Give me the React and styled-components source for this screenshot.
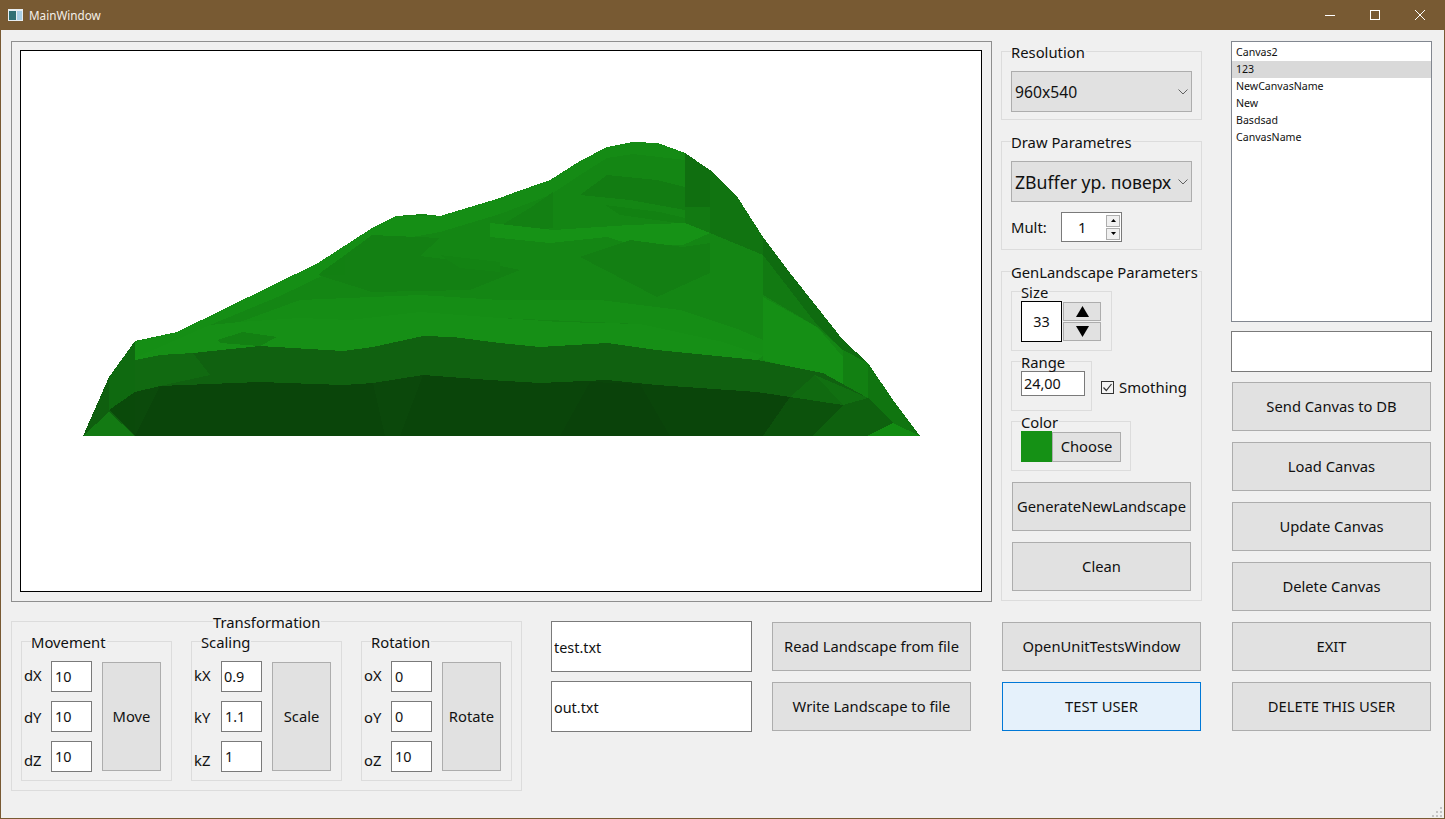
import React from "react";
import styled, { createGlobalStyle } from "styled-components";

const Global = createGlobalStyle`
  html, body { margin: 0; padding: 0; background: #f0f0f0; overflow: hidden; }
  * { box-sizing: border-box; }
  body { font-family: "Noto Sans", "Open Sans", sans-serif; color: #111; }
`;
const Window = styled.div`
  width: 1445px; height: 819px; display: flex; flex-direction: column;
  border: 1px solid #785a33; border-top: 0; position: relative; background: #f0f0f0;
`;
const TitleBar = styled.header`
  height: 30px; flex: none; background: #785a33; color: #f4efe8; display: flex; align-items: center;
  padding: 0 3px 0 8px; margin: 0 -1px; font-size: 11.7px;
`;
const TitleText = styled.span` margin-left: 6px; flex: 1; `;
const Caption = styled.button`
  width: 45px; height: 30px; border: 0; background: transparent; padding: 0; display: flex;
  align-items: center; justify-content: center; color: #fff;
`;
const Body = styled.main` flex: 1; display: flex; gap: 29px; padding: 11px 0 0 10px; `;
const Main = styled.div` width: 1191px; flex: none; `;
const TopRow = styled.div` display: flex; gap: 9px; align-items: flex-start; `;
const CanvasFrame = styled.div`
  width: 981px; height: 561px; border: 1px solid #8f8f8f; padding: 8px; flex: none;
`;
const Canvas = styled.div`
  width: 962px; height: 542px; border: 1px solid #000; background: #fff;
  svg { display: block; }
`;
const SideColumn = styled.div`
  width: 201px; flex: none; margin-top: 10px; display: flex; flex-direction: column; gap: 21px;
`;
const Group = styled.section`
  position: relative; border: 1px solid #dcdcdc; flex: none;
  width: ${p => p.$w}px; height: ${p => p.$h}px;
  padding: ${p => p.$pt ?? 19}px ${p => p.$px ?? 9}px 0;
  display: ${p => (p.$flow ? "flex" : "block")}; flex-direction: column; gap: ${p => p.$gap ?? 0}px;
`;
const Legend = styled.span`
  position: absolute; left: ${p => p.$left ?? 9}px; top: -8px; background: #f0f0f0; padding: 0 1px 0 0;
  font-size: 14.8px; line-height: 16px; white-space: nowrap;
`;
const Combo = styled.div`
  height: 41px; background: #e1e1e1; border: 1px solid #adadad; display: flex; align-items: center;
  padding: 0 3px; font-size: ${p => p.$size}px; justify-content: space-between; white-space: nowrap; overflow: hidden;
  svg { flex: none; }
`;
const Row = styled.div`
  display: flex; align-items: ${p => p.$align || "center"}; gap: ${p => p.$gap ?? 0}px;
  margin-top: ${p => p.$mt ?? 0}px;
`;
const MultLabel = styled.span` width: 50px; font-size: 14.8px; `;
const Spin = styled.div`
  width: 61px; height: 30px; background: #fff; border: 1px solid #7a7a7a; display: flex; align-items: center;
  font-size: 14.8px; justify-content: space-between; padding: 0 1px 0 16px;
`;
const SpinArrows = styled.div` display: flex; flex-direction: column; gap: 1px; `;
const SpinArrow = styled.div`
  width: 14px; height: 12px; background: #f0f0f0; border: 1px solid #adadad; display: flex; align-items: center; justify-content: center;
`;
const Field = styled.input`
  display: block; width: ${p => p.$w}px; height: ${p => p.$h}px; border: 1px solid ${p => p.$dark ? "#000" : "#7a7a7a"};
  background: #fff; font: inherit; font-size: 14.4px; color: #111; padding: ${p => p.$top ?? 0}px ${p => p.$pad ?? 2}px 0; outline: 0;
  text-align: ${p => p.$center ? "center" : "left"}; flex: none; border-radius: 0;
`;
const Stepper = styled.div` display: flex; flex-direction: column; gap: 1px; margin-top: 1px; `;
const StepButton = styled.button`
  width: 38px; height: 19px; background: #e1e1e1; border: 1px solid #adadad; padding: 0; display: flex;
  align-items: center; justify-content: center;
`;
const Check = styled.div`
  width: 13px; height: 13px; border: 1px solid #333; background: #f4f4f4; display: flex; align-items: center; justify-content: center; flex: none;
`;
const CheckText = styled.span` font-size: 14.9px; margin-left: 5px; `;
const Swatch = styled.div` width: 31px; height: 31px; background: #159115; flex: none; `;
const Button = styled.button`
  display: block; flex: none; width: ${p => p.$w ?? 199}px; height: ${p => p.$h ?? 49}px; margin: ${p => p.$m ?? 1}px;
  background: ${p => (p.$active ? "#e5f1fb" : "#e1e1e1")}; border: 1px solid ${p => (p.$active ? "#0078d7" : "#adadad")};
  font: inherit; font-size: 14.75px; color: #111; padding: 0 0 2px; border-radius: 0; white-space: nowrap;
`;
const BottomRow = styled.div` display: flex; margin-top: 19px; align-items: flex-start; `;
const SubGroups = styled.div` display: flex; gap: 19px; `;
const Transform = styled.div` display: flex; gap: 10px; `;
const Axes = styled.div` display: flex; flex-direction: column; gap: 9px; `;
const Axis = styled.div` display: flex; height: 31px; `;
const AxisLabel = styled.span`
  width: 27px; padding-top: ${p => p.$top}px; font-size: 14.8px; line-height: 20px; flex: none;
  height: 40px; margin-bottom: -9px;
`;
const Stack = styled.div`
  display: flex; flex-direction: column; gap: 9px; flex: none; margin-left: ${p => p.$ml ?? 0}px;
`;
const RightColumn = styled.aside` width: 201px; flex: none; display: flex; flex-direction: column; gap: 9px; `;
const List = styled.ul`
  list-style: none; margin: 0; padding: 2px 0 0; height: 281px; background: #fff; border: 1px solid #828790; font-size: 10.6px;
`;
const Item = styled.li`
  height: 17px; line-height: 17px; padding-left: 4px; background: ${p => (p.$selected ? "#d9d9d9" : "transparent")};
`;
const Grip = styled.svg` position: absolute; right: 2px; bottom: 1px; `;

const outline = "83,436 109,377 135,341 177,332 318,263 372,228 396,216 422,214 440,216 500,198 513,193 550,180 580,161 607,147 633,142 658,143 685,153 710,170 738,198 763,237 790,273 817,307 843,340 868,363 893,400 920,436";
const midBand = "135,360 160,355 193,353 260,346 343,351 373,347 423,336 453,337 500,343 540,347 607,343 657,350 757,360 823,373 868,398 843,405 790,397 757,392 657,385 607,380 540,383 490,380 423,375 373,383 343,385 260,382 160,386 135,392";
const darkBand = "135,392 160,386 260,382 343,385 373,383 423,375 490,380 540,383 607,380 657,385 757,392 790,397 813,436 135,436";
const facets = [
  ["#158e15", "135,342 177,332 318,263 372,228 396,216 440,216 500,198 500,214 440,232 396,240 330,272 280,296 210,325 135,358"],
  ["#158b15", "500,198 550,180 580,161 607,147 633,142 658,143 685,153 685,160 633,154 607,158 580,175 550,195 500,214"],
  ["#158d15", "240,322 300,300 420,295 500,300 600,300 680,310 740,330 763,340 763,356 640,324 500,318 350,320"],
  ["#168f16", "135,358 210,325 240,322 300,318 350,320 420,312 500,318 560,322 640,324 723,342 763,356 757,360 657,350 607,343 540,347 500,343 453,337 423,336 373,347 343,351 260,346 193,353 160,355 135,360"],
  ["#138013", "318,275 372,235 440,238 420,256 500,266 520,270 470,290 372,292"],
  ["#138013", "500,226 530,208 553,192 553,228 500,235"],
  ["#127c12", "580,195 607,175 657,180 685,187 685,210 630,200"],
  ["#128112", "605,205 660,212 685,218 685,224 620,215"],
  ["#169216", "490,223 553,230 630,225 685,223 710,233 683,245 633,245 607,237 550,243 490,237"],
  ["#106f10", "685,153 710,170 710,207 685,207"],
  ["#117411", "710,170 738,198 763,237 763,255 710,233"],
  ["#127a12", "685,207 710,207 710,233 685,223"],
  ["#0f6c10", "763,237 790,273 817,307 843,340 868,363 843,350 817,325 763,290"],
  ["#127a12", "763,255 763,295 817,327 843,350 817,325 790,290"],
  ["#137f13", "580,257 630,240 683,247 710,243 710,273 657,297 630,283"],
  ["#158f15", "763,297 817,327 843,357 843,387 817,375 763,360"],
  ["#128012", "843,350 868,363 893,400 868,398 843,387"],
  ["#138013", "217,340 243,332 277,337 260,346 220,343"],
  ["#128012", "320,273 345,255 345,275 322,275"],
  ["#138313", "440,255 500,262 500,272 460,268"],
];
const lowerFacets = [
  ["#116a11", "135,360 160,355 193,353 210,375 160,386 135,392"],
  ["#0f5f0f", "83,436 109,377 135,341 135,436"],
  ["#0f6a10", "109,377 135,341 135,392 109,410"],
  ["#0a4a0a", "109,410 135,392 135,436"],
  ["#137a13", "109,412 135,436 83,436"],
  ["#0b4a0b", "135,392 160,386 135,436"],
  ["#0b480b", "373,383 423,375 400,436 385,436"],
  ["#0a420a", "590,382 640,384 670,436 560,436"],
  ["#106a10", "790,397 815,375 843,405"],
  ["#0c520c", "790,397 843,405 813,436 763,436"],
  ["#0e610e", "843,405 868,398 893,423 867,436 813,436"],
  ["#107510", "868,398 868,363 893,400 920,436 893,423"],
  ["#128c12", "867,436 893,423 920,436"],
  ["#117011", "815,375 843,387 868,398 843,405"],
];

const Landscape = () => (
  <svg width="960" height="540" viewBox="21 51 960 540" shapeRendering="crispEdges" aria-hidden="true">
    <polygon points={outline} fill="#148614" />
    {facets.map(([c, p], i) => <polygon key={i} points={p} fill={c} />)}
    <polygon points={midBand} fill="#106110" />
    <polygon points={darkBand} fill="#0a450a" />
    {lowerFacets.map(([c, p], i) => <polygon key={i} points={p} fill={c} />)}
  </svg>
);

const Chevron = () => (
  <svg width="10" height="6" viewBox="0 0 10 6"><path d="M0.5 0.5 5 5 9.5 0.5" fill="none" stroke="#606060" /></svg>
);
const Tri = ({ down, w = 5, h = 3, color = "#000" }) => (
  <svg width={w} height={h} viewBox="0 0 10 10" preserveAspectRatio="none">
    <polygon points={down ? "0,0 10,0 5,10" : "5,0 10,10 0,10"} fill={color} />
  </svg>
);

const TransformGroup = ({ title, rows, action }) => (
  <Group $w={151} $h={140} $pt={19} $px={2}>
    <Legend>{title}</Legend>
    <Transform>
      <Axes>
        {rows.map(([label, value, top, pad]) => (
          <Axis key={label}>
            <AxisLabel $top={top}>{label}</AxisLabel>
            <Field $w={41} $h={31} $pad={pad} defaultValue={value} readOnly />
          </Axis>
        ))}
      </Axes>
      <Button $w={59} $h={109} $m="1px 0 0">{action}</Button>
    </Transform>
  </Group>
);

export default function App() {
  return (
    <>
      <Global />
      <Window>
        <TitleBar>
          <svg width="15" height="12" viewBox="0 0 15 12" aria-hidden="true">
            <rect width="15" height="12" fill="#e8eef2" />
            <rect x="1" y="2" width="7" height="9" fill="#2f6f74" />
            <rect x="9" y="2" width="5" height="9" fill="#a9cfe6" />
          </svg>
          <TitleText>MainWindow</TitleText>
          <Caption aria-label="minimize"><svg width="10" height="10" viewBox="0 0 10 10"><path d="M0 5.5h10" stroke="#fff" /></svg></Caption>
          <Caption aria-label="maximize"><svg width="10" height="10" viewBox="0 0 10 10"><rect x=".5" y=".5" width="9" height="9" fill="none" stroke="#fff" /></svg></Caption>
          <Caption aria-label="close"><svg width="10" height="10" viewBox="0 0 10 10"><path d="M0 0 10 10M10 0 0 10" stroke="#fff" /></svg></Caption>
        </TitleBar>
        <Body>
          <Main>
            <TopRow>
              <CanvasFrame><Canvas><Landscape /></Canvas></CanvasFrame>
              <SideColumn>
                <Group $w={201} $h={69}>
                  <Legend>Resolution</Legend>
                  <Combo $size={15.7}>960x540<Chevron /></Combo>
                </Group>
                <Group $w={201} $h={109} $flow $gap={10}>
                  <Legend>Draw Parametres</Legend>
                  <Combo $size={17.7}>ZBuffer ур. поверх<Chevron /></Combo>
                  <Row>
                    <MultLabel>Mult:</MultLabel>
                    <Spin>1<SpinArrows>
                      <SpinArrow><Tri /></SpinArrow>
                      <SpinArrow><Tri down /></SpinArrow>
                    </SpinArrows></Spin>
                  </Row>
                </Group>
                <Group $w={201} $h={330} $flow $gap={10}>
                  <Legend>GenLandscape Parameters</Legend>
                  <Group $w={101} $h={60} $pt={9}>
                    <Legend>Size</Legend>
                    <Row $align="flex-start" $gap={1}>
                      <Field $w={41} $h={41} $dark $center defaultValue="33" readOnly />
                      <Stepper>
                        <StepButton aria-label="up"><Tri w={13} h={11} /></StepButton>
                        <StepButton aria-label="down"><Tri down w={13} h={11} /></StepButton>
                      </Stepper>
                    </Row>
                  </Group>
                  <Row $gap={9}>
                    <Group $w={81} $h={50} $pt={9}>
                      <Legend>Range</Legend>
                      <Field $w={64} $h={25} defaultValue="24,00" readOnly />
                    </Group>
                    <Row $mt={2}>
                      <Check>
                        <svg width="11" height="11" viewBox="0 0 11 11"><path d="M1.5 5.5 4.3 8.5 9.5 2" fill="none" stroke="#333" strokeWidth="1.2" /></svg>
                      </Check>
                      <CheckText>Smothing</CheckText>
                    </Row>
                  </Row>
                  <Group $w={120} $h={50} $pt={9}>
                    <Legend>Color</Legend>
                    <Row $align="flex-start">
                      <Swatch />
                      <Button $w={69} $h={30} $m="1px 0 0">Choose</Button>
                    </Row>
                  </Group>
                  <Stack>
                    <Button $w={179}>GenerateNewLandscape</Button>
                    <Button $w={179}>Clean</Button>
                  </Stack>
                </Group>
              </SideColumn>
            </TopRow>
            <BottomRow>
              <Group $w={511} $h={170} $pt={19}>
                <Legend $left={201}>Transformation</Legend>
                <SubGroups>
                  <TransformGroup title="Movement" action="Move"
                    rows={[["dX", "10", 4, 3], ["dY", "10", 6, 3], ["dZ", "10", 9, 3]]} />
                  <TransformGroup title="Scaling" action="Scale"
                    rows={[["kX", "0.9", 4, 2], ["kY", "1.1", 6, 3], ["kZ", "1", 9, 3]]} />
                  <TransformGroup title="Rotation" action="Rotate"
                    rows={[["oX", "0", 4, 3], ["oY", "0", 6, 3], ["oZ", "10", 9, 3]]} />
                </SubGroups>
              </Group>
              <Stack $ml={29}>
                <Field $w={201} $h={51} $top={2} defaultValue="test.txt" readOnly />
                <Field $w={201} $h={51} $top={2} defaultValue="out.txt" readOnly />
              </Stack>
              <Stack $ml={19}>
                <Button>Read Landscape from file</Button>
                <Button>Write Landscape to file</Button>
              </Stack>
              <Stack $ml={29}>
                <Button>OpenUnitTestsWindow</Button>
                <Button $active>TEST USER</Button>
              </Stack>
            </BottomRow>
          </Main>
          <RightColumn>
            <List>
              <Item>Canvas2</Item>
              <Item $selected>123</Item>
              <Item>NewCanvasName</Item>
              <Item>New</Item>
              <Item>Basdsad</Item>
              <Item>CanvasName</Item>
            </List>
            <Field $w={201} $h={41} readOnly />
            <Button>Send Canvas to DB</Button>
            <Button>Load Canvas</Button>
            <Button>Update Canvas</Button>
            <Button>Delete Canvas</Button>
            <Button>EXIT</Button>
            <Button>DELETE THIS USER</Button>
          </RightColumn>
        </Body>
        <Grip width="10" height="10" viewBox="0 0 10 10" aria-hidden="true">
          <path d="M8 0h2v2H8zM4 4h2v2H4zM8 4h2v2H8zM0 8h2v2H0zM4 8h2v2H4zM8 8h2v2H8z" fill="#c4c4c4" />
        </Grip>
      </Window>
    </>
  );
}
